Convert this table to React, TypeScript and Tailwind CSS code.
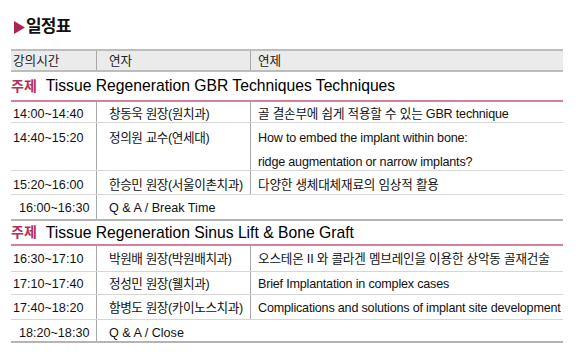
import React from 'react';

const font = { fontFamily: '"Liberation Sans", "Noto Sans CJK KR", sans-serif' };

type Row = { time: string; speaker: string; topic: string[]; h: string; pt: string };

const session1: Row[] = [
  { time: '14:00~14:40', speaker: '창동욱 원장(원치과)', topic: ['골 결손부에 쉽게 적용할 수 있는 GBR technique'], h: 'h-[21px]', pt: 'pt-[3px]' },
  {
    time: '14:40~15:20',
    speaker: '정의원 교수(연세대)',
    topic: ['How to embed the implant within bone:', 'ridge augmentation or narrow implants?'],
    h: 'h-[48px]',
    pt: 'pt-[6px]',
  },
  { time: '15:20~16:00', speaker: '한승민 원장(서울이촌치과)', topic: ['다양한 생체대체재료의 임상적 활용'], h: 'h-[24px]', pt: 'pt-[5px]' },
];

const session2: Row[] = [
  { time: '16:30~17:10', speaker: '박원배 원장(박원배치과)', topic: ['오스테온 II 와 콜라겐 멤브레인을 이용한 상악동 골재건술'], h: 'h-[26px]', pt: 'pt-[4px]' },
  { time: '17:10~17:40', speaker: '정성민 원장(웰치과)', topic: ['Brief Implantation in complex cases'], h: 'h-[23px]', pt: 'pt-[3px]' },
  { time: '17:40~18:20', speaker: '함병도 원장(카이노스치과)', topic: ['Complications and solutions of implant site development'], h: 'h-[25px]', pt: 'pt-[4px]' },
];

function Theme({ title, h }: { title: string; h: string }) {
  return (
    <div className={`flex items-center ${h} border-b-2 border-[#d2809c] text-[15.7px] text-black`}>
      <span className="font-bold text-[#b0305a] text-[14px]">주제</span>
      <span className="ml-[9px]">{title}</span>
    </div>
  );
}

function Lecture({ row }: { row: Row }) {
  return (
    <div className={`flex ${row.h} border-b border-[#d6d6d6] text-[12.6px] text-[#111]`}>
      <div className={`w-[86px] border-r border-[#a8a8a8] pl-[2px] ${row.pt}`}>{row.time}</div>
      <div className={`w-[154px] border-r border-[#a8a8a8] pl-[12px] ${row.pt} tracking-[-0.4px]`}>{row.speaker}</div>
      <div className={`flex-1 pl-[7px] ${row.pt} flex flex-col gap-[5px] whitespace-nowrap`}>
        {row.topic.map((t) => (
          <span key={t} className="tracking-[-0.2px]">{t}</span>
        ))}
      </div>
    </div>
  );
}

function Break({ time, label, h }: { time: string; label: string; h: string }) {
  return (
    <div className={`flex ${h} border-b-2 border-[#b4b4b4] text-[12.6px] text-[#111]`}>
      <div className="w-[86px] border-r border-[#a8a8a8] pl-[8px] pt-[4px]">{time}</div>
      <div className="flex-1 pl-[12px] pt-[4px]">{label}</div>
    </div>
  );
}

export default function App() {
  return (
    <div className="w-[580px] h-[360px] bg-white overflow-hidden" style={font}>
      <div className="pl-[14px] pt-[14px] h-[49px]">
        <div className="flex items-center">
          <svg width="11" height="13" viewBox="0 0 11 13" className="mt-[1px]">
            <polygon points="0,0 11,6.5 0,13" fill="#a8264f" />
          </svg>
          <span className="ml-[1px] font-bold text-[17px] text-[#111] tracking-[-0.8px]">일정표</span>
        </div>
      </div>

      <div className="ml-[11px] w-[552px]">
        <div className="flex h-[23px] bg-[#ebebeb] border-t-2 border-b-2 border-[#bcbcbc] text-[12.6px] text-[#222]">
          <div className="w-[86px] border-r border-[#a8a8a8] pl-[2px] pt-[1px]">강의시간</div>
          <div className="w-[154px] border-r border-[#a8a8a8] pl-[12px] pt-[1px]">연자</div>
          <div className="flex-1 pl-[7px] pt-[1px]">연제</div>
        </div>

        <Theme title="Tissue Regeneration GBR Techniques Techniques" h="h-[30px]" />
        {session1.map((r) => (
          <Lecture key={r.time} row={r} />
        ))}
        <Break time="16:00~16:30" label="Q & A / Break Time" h="h-[26px]" />

        <Theme title="Tissue Regeneration Sinus Lift & Bone Graft" h="h-[25px]" />
        {session2.map((r) => (
          <Lecture key={r.time} row={r} />
        ))}
        <Break time="18:20~18:30" label="Q & A / Close" h="h-[23px]" />
      </div>
    </div>
  );
}
